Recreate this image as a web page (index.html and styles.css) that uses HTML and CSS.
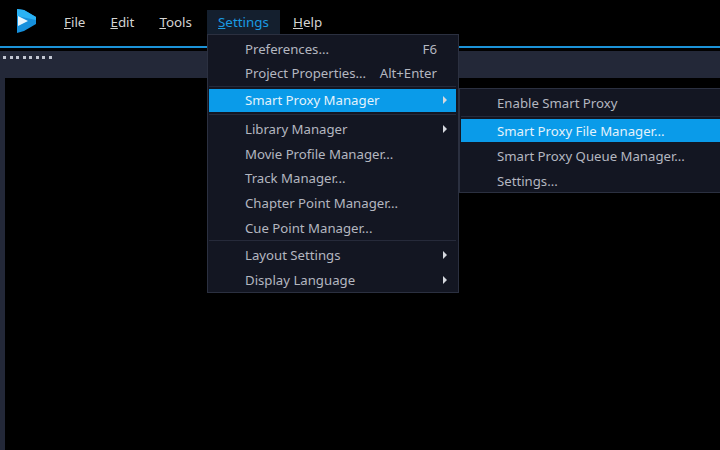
FILE: index.html
```html
<!DOCTYPE html>
<html lang="en">

<head>
  <meta charset="UTF-8">
  <title>Settings menu</title>
  <link rel="stylesheet" href="styles.css">
</head>

<body>
  <div class="menubar">
    <svg class="logo" width="19" height="24" viewBox="0 0 19 24">
      <path d="M0 0 L7 1 L19 8 L19 15 L7 22 L0 24 Z" fill="#1690dc" />
      <path d="M0 0 L7 1 L19 8 L19 11 L0 7 Z" fill="#2ab2f4" />
      <path d="M1 7 L11 12 L1 17 Z" fill="#e6f4fc" />
    </svg>
    <div class="menu-item"><u>F</u>ile</div>
    <div class="menu-item"><u>E</u>dit</div>
    <div class="menu-item"><u>T</u>ools</div>
    <div class="menu-item menu-open"><u>S</u>ettings</div>
    <div class="menu-item"><u>H</u>elp</div>
  </div>
  <div class="toolbar">
    <div class="dots">
      <span></span><span></span><span></span><span></span><span></span><span></span><span></span><span></span>
    </div>
  </div>
  <div class="workspace">
    <div class="preview"></div>
  </div>

  <div class="dropdown">
    <div class="group">
      <div class="row"><span>Preferences...</span><span class="key">F6</span></div>
      <div class="row"><span>Project Properties...</span><span class="key">Alt+Enter</span></div>
    </div>
    <div class="group">
      <div class="row row-active"><span>Smart Proxy Manager</span><i class="arrow"></i></div>
    </div>
    <div class="group">
      <div class="row"><span>Library Manager</span><i class="arrow"></i></div>
      <div class="row"><span>Movie Profile Manager...</span></div>
      <div class="row"><span>Track Manager...</span></div>
      <div class="row"><span>Chapter Point Manager...</span></div>
      <div class="row"><span>Cue Point Manager...</span></div>
    </div>
    <div class="group">
      <div class="row"><span>Layout Settings</span><i class="arrow"></i></div>
      <div class="row"><span>Display Language</span><i class="arrow"></i></div>
    </div>
  </div>

  <div class="submenu">
    <div class="group">
      <div class="row"><span>Enable Smart Proxy</span></div>
    </div>
    <div class="group">
      <div class="row row-active"><span>Smart Proxy File Manager...</span></div>
      <div class="row"><span>Smart Proxy Queue Manager...</span></div>
      <div class="row"><span>Settings...</span></div>
    </div>
  </div>
</body>

</html>
```

FILE: styles.css
```css
html,
body {
  height: 100%;
}

body {
  margin: 0;
  background: #000;
  color: #b4b7c0;
  font-family: "Noto Sans", sans-serif;
  font-size: 13.2px;
  overflow: hidden;
}

.menubar {
  display: flex;
  align-items: flex-start;
  height: 46px;
  padding-left: 17px;
}

.logo {
  margin-top: 9px;
  margin-right: 28px;
}

.menu-item {
  height: 24px;
  margin-top: 10px;
  margin-right: 25px;
  line-height: 24px;
  font-size: 13.4px;
  color: #d4d4d2;
}

.menu-open {
  margin-left: -10px;
  margin-right: 13px;
  padding: 0 11px;
  background: #141f2e;
  color: #1a9be2;
}

.toolbar {
  border-top: 2px solid #1c93d8;
  height: 32px;
  padding-top: 3px;
  box-sizing: border-box;
  background-clip: content-box;
  background-color: #232838;
}

.dots {
  display: flex;
  gap: 3.5px;
  padding: 5px 0 0 3px;
}

.dots span {
  width: 3px;
  height: 3px;
  background: #c3c7d2;
}

.workspace {
  height: 372px;
  padding-left: 5px;
  background: #232838;
}

.preview {
  height: 100%;
  background: #000;
}

.dropdown,
.submenu {
  position: absolute;
  box-sizing: border-box;
  background: #131622;
  border: 1px solid #2b3040;
}

.dropdown {
  left: 207px;
  top: 34px;
  width: 252px;
  height: 259px;
  padding: 1.45px 2px 0 1px;
}

.dropdown .group:first-child {
  padding-bottom: 0.35px;
}

.submenu {
  left: 459px;
  top: 88px;
  width: 261px;
  height: 105px;
  padding: 2px 0 0 1px;
  border-right: 0;
}

.group {
  padding-top: 2px;
  border-bottom: 1px solid #262a3a;
}

.group:first-child {
  padding-top: 0;
}

.group:last-child {
  border-bottom: 0;
}

.submenu .group + .group {
  padding-top: 2.5px;
}

.row {
  display: flex;
  justify-content: space-between;
  align-items: center;
  height: 24.6px;
  padding: 0 9px 0 36px;
  box-sizing: border-box;
}

.row-active {
  height: 23px;
  margin: 0 0 2px;
  background: #0a9be9;
  color: #e3f2fb;
}

.key {
  margin-right: 10px;
}

.arrow {
  width: 0;
  height: 0;
  border-left: 4px solid #d5d8de;
  border-top: 4px solid transparent;
  border-bottom: 4px solid transparent;
}
```
